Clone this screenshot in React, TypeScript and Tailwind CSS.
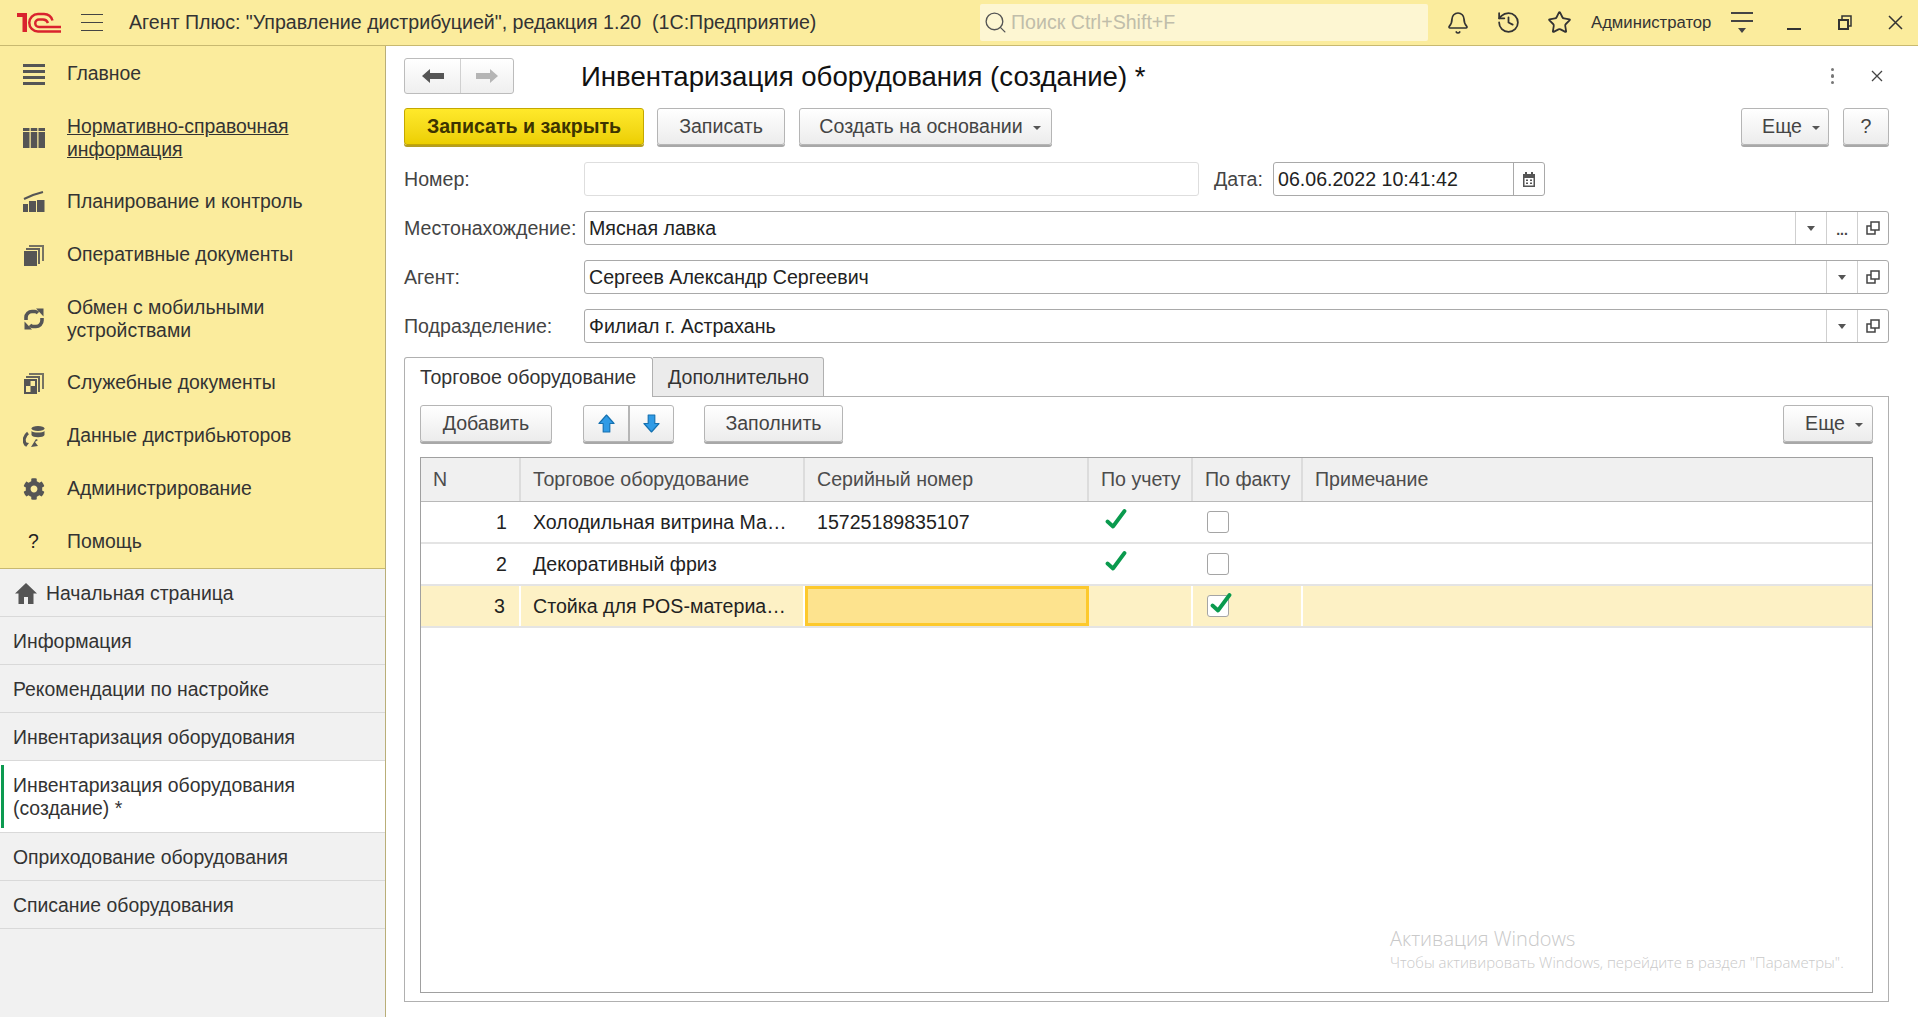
import { Bell, History, Search, Star } from "lucide-react";
import { FaCog } from "react-icons/fa";
import type { ReactNode } from "react";

function Logo() {
  return (
    <svg width="46" height="24" viewBox="0 0 46 24" fill="none" stroke="#d9232e" strokeWidth="2.500">
      <path d="M1 2h10v19H6.500V6H1z" fill="#d9232e" stroke="none" />
      <path d="M45 20.500H22a8.750 8.750 0 0 1 0-17.500h6a9 9 0 0 1 8.500 6.500" />
      <path d="M45 16H23a3.750 3.750 0 0 1 0-7.500h4a5.500 5.500 0 0 1 5 3.500" />
    </svg>
  );
}

const ic = "w-[22px] h-[22px] text-[#555]";

function MainIcon() {
  return (
    <svg className={ic} viewBox="0 0 22 22" fill="currentColor">
      <rect y="1" width="22" height="3" />
      <rect y="7" width="22" height="3" />
      <rect y="13" width="22" height="3" />
      <rect y="19" width="22" height="3" />
    </svg>
  );
}

function RefIcon() {
  return (
    <svg className={ic} viewBox="0 0 22 22" fill="currentColor">
      <rect x="0" y="1" width="6.500" height="3" />
      <rect x="7.750" y="1" width="6.500" height="3" />
      <rect x="15.500" y="1" width="6.500" height="3" />
      <rect x="0" y="5" width="6.500" height="16" />
      <rect x="7.750" y="5" width="6.500" height="16" />
      <rect x="15.500" y="5" width="6.500" height="16" />
    </svg>
  );
}

function PlanIcon() {
  return (
    <svg className={ic} viewBox="0 0 22 22" fill="currentColor">
      <rect x="0" y="13" width="5" height="8" />
      <rect x="6" y="10" width="7" height="11" />
      <rect x="14" y="9" width="7.500" height="12" />
      <path d="M1 8l9-4 10-3" fill="none" stroke="currentColor" strokeWidth="2" />
    </svg>
  );
}

function DocsIcon() {
  return (
    <svg className={ic} viewBox="0 0 22 22" fill="currentColor">
      <path d="M6 4V1h15v16h-2V3H6z" opacity=".8" />
      <path d="M3 7V4h14v16h-2V6H3z" opacity=".9" />
      <rect x="1" y="7" width="13" height="15" />
    </svg>
  );
}

function ServiceIcon() {
  return (
    <svg className={ic} viewBox="0 0 22 22" fill="currentColor">
      <path d="M6 4V1h15v16h-2V3H6z" opacity=".8" />
      <path d="M3 7V4h14v16h-2V6H3z" opacity=".9" />
      <path d="M1 7h13v15H1zM7.500 9v5H3v6h4.500v-6H12V9z" fillRule="evenodd" />
    </svg>
  );
}

function SyncIcon() {
  return (
    <svg className={ic} viewBox="0 0 22 22" fill="none" stroke="currentColor" strokeWidth="3.600">
      <path d="M3 12V9.500a6 6 0 0 1 6-6h3a5 5 0 0 1 3 1.500" />
      <path d="M19 10v2.500a6 6 0 0 1-6 6h-3a5 5 0 0 1-3-1.500" />
      <path d="M13 0.500l7.500 0v8z" fill="currentColor" stroke="none" />
      <path d="M9 21.500H1.500v-8z" fill="currentColor" stroke="none" />
    </svg>
  );
}

function DataIcon() {
  return (
    <svg className={ic} viewBox="0 0 22 22" fill="currentColor">
      <ellipse cx="15" cy="3.500" rx="6.500" ry="2.500" />
      <path d="M8.500 6c2 2 11 2 13 0v4c-1 3-12 3-13 0z" />
      <path d="M5 8C1 11 0 16 3 20" fill="none" stroke="currentColor" strokeWidth="3" />
      <path d="M0 17l6 1-3 4zM8 22l7-1-3-4 3-2-2-1z" />
    </svg>
  );
}

function HomeIcon() {
  return (
    <svg width="22" height="21" viewBox="0 0 22 21" fill="#555">
      <path d="M11 0L0 10.500h3.500V21h5.500v-7h4v7h5.500V10.500H22z" />
    </svg>
  );
}

const mainItems: { icon: ReactNode; lines: string[]; link?: boolean; pad: string }[] = [
  { icon: <MainIcon />, lines: ["Главное"], pad: "pt-[16px] pb-[14px]" },
  { icon: <RefIcon />, lines: ["Нормативно-справочная", "информация"], link: true, pad: "pt-[16px] pb-[14px]" },
  { icon: <PlanIcon />, lines: ["Планирование и контроль"], pad: "py-[15px]" },
  { icon: <DocsIcon />, lines: ["Оперативные документы"], pad: "py-[15px]" },
  { icon: <SyncIcon />, lines: ["Обмен с мобильными", "устройствами"], pad: "pt-[15px] pb-[14px]" },
  { icon: <ServiceIcon />, lines: ["Служебные документы"], pad: "py-[15px]" },
  { icon: <DataIcon />, lines: ["Данные дистрибьюторов"], pad: "py-[15px]" },
  { icon: <FaCog className={ic} />, lines: ["Администрирование"], pad: "py-[15px]" },
  { icon: <span className="text-[#222]">?</span>, lines: ["Помощь"], pad: "py-[15px]" },
];

const openItems = [
  "Информация",
  "Рекомендации по настройке",
  "Инвентаризация оборудования",
];

function Btn({ children, className = "" }: { children: ReactNode; className?: string }) {
  return (
    <button className={`flex items-center justify-center h-[37px] rounded-[3px] border border-[#b5b5b5] bg-linear-to-b from-white to-[#ececec] shadow-[0_2px_0_#a8a8a8] text-[#444] ${className}`}>
      {children}
    </button>
  );
}

function Caret() {
  return <span className="ml-[10px] mt-[2px] w-0 h-0 border-x-[4px] border-x-transparent border-t-[4px] border-t-[#555]" />;
}

function OpenIcon() {
  return (
    <svg width="14" height="14" viewBox="0 0 14 14" fill="none" stroke="#444" strokeWidth="1.500">
      <rect x="5" y="1" width="8" height="8" />
      <path d="M5 5H1v8h8V9" />
    </svg>
  );
}

function FieldButton({ children }: { children: ReactNode }) {
  return <span className="flex items-center justify-center w-[31px] h-full border-l border-[#cfcfcf]">{children}</span>;
}

function DropTriangle() {
  return <span className="w-0 h-0 border-x-[4px] border-x-transparent border-t-[5px] border-t-[#555]" />;
}

function Field({ label, value, dots }: { label: string; value: string; dots?: boolean }) {
  return (
    <div className="flex items-center h-[34px] mt-[15px]">
      <label className="w-[180px] text-[#444] whitespace-nowrap">{label}</label>
      <div className="flex flex-1 items-center h-full rounded-[3px] border border-[#a9a9a9] bg-white">
        <span className="flex-1 pl-[4px] text-[#222]">{value}</span>
        <FieldButton><DropTriangle /></FieldButton>
        {dots && <FieldButton><span className="mt-[4px] text-[14px] font-bold leading-none text-[#444]">...</span></FieldButton>}
        <FieldButton><OpenIcon /></FieldButton>
      </div>
    </div>
  );
}

function BlueArrow({ down }: { down?: boolean }) {
  return (
    <svg width="17" height="19" viewBox="0 0 18 20" className={down ? "rotate-180" : ""}>
      <path d="M9 1l8 9h-4.500v9h-7v-9H1z" fill="#2f9be6" stroke="#1470b0" strokeWidth="1.200" strokeLinejoin="round" />
    </svg>
  );
}

function Tick() {
  return (
    <svg width="22" height="20" viewBox="0 0 22 20" fill="none" stroke="#0a9a4e" strokeWidth="3.800" strokeLinecap="round" strokeLinejoin="round">
      <path d="M2.500 12.500l5.500 5L19.500 2" />
    </svg>
  );
}

function Check({ on }: { on?: boolean }) {
  return (
    <span className="relative block w-[22px] h-[22px] rounded-[3px] border border-[#a5a5a5] bg-white">
      {on && <span className="absolute left-[2px] -top-[3px]"><Tick /></span>}
    </span>
  );
}

const th = "flex items-center px-[12px] h-full border-r-2 border-[#dcdcdc] text-[#4c4c4c]";

const rows = [
  { n: 1, name: "Холодильная витрина Ма…", serial: "15725189835107", plan: true },
  { n: 2, name: "Декоративный фриз", serial: "", plan: true },
];

export default function App() {
  return (
    <div className="flex flex-col h-screen overflow-hidden bg-white text-[19.600px] leading-[23px] text-[#333] font-['Liberation_Sans',Arial,sans-serif]">
      <header className="flex items-center h-[46px] shrink-0 border-b border-[#c8b970] bg-[#fbec9d]">
        <div className="ml-[16px] w-[46px]"><Logo /></div>
        <div className="flex flex-col gap-[6.500px] ml-[19px] w-[22px]">
          <span className="h-[1.500px] bg-[#444]" />
          <span className="h-[1.500px] bg-[#444]" />
          <span className="h-[1.500px] bg-[#444]" />
        </div>
        <div className="ml-[26px] w-[851px] text-[#333] whitespace-nowrap">Агент Плюс: "Управление дистрибуцией", редакция 1.20 &nbsp;(1С:Предприятие)</div>
        <div className="flex items-center w-[448px] h-[37px] rounded-[2px] bg-[#fdf6d2] pl-[3px] text-[#c0bdaa]">
          <Search className="w-[25px] h-[25px] text-[#555]" strokeWidth={1.300} />
          <span className="ml-[3px] whitespace-nowrap">Поиск Ctrl+Shift+F</span>
        </div>
        <Bell className="ml-[18px] w-[24px] h-[26px] text-[#333]" strokeWidth={1.700} />
        <History className="ml-[26px] w-[25px] h-[25px] text-[#333]" strokeWidth={1.700} />
        <Star className="ml-[26px] w-[25px] h-[25px] text-[#333]" strokeWidth={1.700} />
        <span className="ml-[19px] text-[16.700px] text-[#333] whitespace-nowrap">Администратор</span>
        <div className="flex flex-col gap-[6px] ml-[20px] w-[22px] shrink-0 items-center">
          <span className="h-[2px] w-full bg-[#444]" />
          <span className="h-[2px] w-full bg-[#444]" />
          <span className="w-0 h-0 border-x-[4px] border-x-transparent border-t-[5px] border-t-[#444]" />
        </div>
        <span className="ml-[34px] mt-[13px] w-[14px] h-[2.500px] shrink-0 bg-[#333]" />
        <svg className="ml-[37px] shrink-0" width="14" height="15" viewBox="0 0 14 15" fill="none" stroke="#333" strokeWidth="2">
          <rect x="1" y="5" width="9" height="9" />
          <path d="M4 4V1h9v10h-2" strokeWidth="1.500" />
        </svg>
        <svg className="ml-[36px] shrink-0" width="15" height="15" viewBox="0 0 15 15" stroke="#333" strokeWidth="1.500">
          <path d="M1 1l13 13M14 1L1 14" />
        </svg>
      </header>

      <div className="flex flex-1 min-h-0">
        <aside className="flex flex-col w-[386px] shrink-0 border-r border-[#b9ae78] bg-[#f1f1f1] text-[19.400px]">
          <nav className="bg-[#fbec9d] border-b border-[#c8b970]">
            {mainItems.map((item) => (
              <div key={item.lines[0]} className={`flex items-center ${item.pad}`}>
                <span className="flex justify-center w-[67px]">{item.icon}</span>
                <span className={item.link ? "underline" : ""}>
                  {item.lines.map((l) => <div key={l}>{l}</div>)}
                </span>
              </div>
            ))}
          </nav>
          <div className="flex items-center gap-[9px] h-[48px] pl-[15px] pt-[1px] border-b border-[#d9d9d9]">
            <HomeIcon />
            <span>Начальная страница</span>
          </div>
          {openItems.map((t) => (
            <div key={t} className="flex items-center h-[48px] pl-[13px] pt-[2px] border-b border-[#d9d9d9]">{t}</div>
          ))}
          <div className="relative h-[72px] pl-[13px] pt-[13px] bg-white border-b border-[#d9d9d9]">
            <span className="absolute left-[1px] top-[4px] bottom-[4px] w-[3px] bg-[#0c9a50]" />
            Инвентаризация оборудования<br />(создание) *
          </div>
          <div className="flex items-center h-[48px] pl-[13px] pt-[2px] border-b border-[#d9d9d9]">Оприходование оборудования</div>
          <div className="flex items-center h-[48px] pl-[13px] pt-[2px] border-b border-[#d9d9d9]">Списание оборудования</div>
        </aside>

        <main className="flex flex-col flex-1 min-w-0 pl-[18px] pr-[29px] pt-[12px] pb-[15px]">
          <div className="flex items-center h-[36px]">
            <div className="flex items-center w-[110px] h-full rounded-[3px] border border-[#bcbcbc] bg-linear-to-b from-white to-[#efefef]">
              <span className="flex items-center justify-center w-[56px] h-full border-r border-[#d0d0d0]">
                <svg width="22" height="14" viewBox="0 0 22 14" fill="#555"><path d="M0 7l8-7v4h14v6H8v4z" /></svg>
              </span>
              <span className="flex items-center justify-center flex-1">
                <svg width="22" height="14" viewBox="0 0 22 14" fill="#b5b5b5"><path d="M22 7l-8-7v4H0v6h14v4z" /></svg>
              </span>
            </div>
            <h1 className="ml-[67px] text-[27.600px] text-[#111] whitespace-nowrap">Инвентаризация оборудования (создание) *</h1>
            <span className="ml-auto flex flex-col gap-[3px] mr-[37px]">
              <span className="w-[3.500px] h-[3.500px] rounded-full bg-[#777]" />
              <span className="w-[3.500px] h-[3.500px] rounded-full bg-[#777]" />
              <span className="w-[3.500px] h-[3.500px] rounded-full bg-[#777]" />
            </span>
            <svg className="mr-[6px]" width="12" height="12" viewBox="0 0 12 12" stroke="#444" strokeWidth="1.300">
              <path d="M1 1l10 10M11 1L1 11" />
            </svg>
          </div>

          <div className="flex mt-[14px]">
            <button className="h-[37px] w-[240px] rounded-[3px] border border-[#c4a800] bg-linear-to-b from-[#ffe92a] to-[#eccf00] shadow-[0_2px_0_#b59e1f] text-[#3d3400] font-bold">
              Записать и закрыть
            </button>
            <Btn className="ml-[13px] w-[128px]">Записать</Btn>
            <Btn className="ml-[14px] w-[253px] pl-[9px]">Создать на основании<Caret /></Btn>
            <Btn className="ml-auto w-[88px] pl-[12px]">Еще<Caret /></Btn>
            <Btn className="ml-[14px] w-[46px]">?</Btn>
          </div>

          <div className="flex items-center h-[34px] mt-[17px]">
            <label className="w-[180px] text-[#444]">Номер:</label>
            <div className="w-[615px] h-full rounded-[3px] border border-[#dedede]" />
            <label className="ml-[15px] w-[59px] text-[#444]">Дата:</label>
            <div className="flex items-center w-[272px] h-full rounded-[3px] border border-[#a9a9a9]">
              <span className="flex-1 pl-[4px] text-[#222]">06.06.2022 10:41:42</span>
              <span className="flex items-center justify-center w-[31px] h-full border-l border-[#a9a9a9]">
                <svg width="12" height="15" viewBox="0 0 12 15" fill="#555">
                  <path d="M0 2h2V0h2v2h4V0h2v2h2v13H0zM1.500 6v7.500h9V6zM3 7.500h2v1.500H3zm4 0h2v1.500H7zM3 10.500h2V12H3zm4 0h2V12H7z" fillRule="evenodd" />
                </svg>
              </span>
            </div>
          </div>
          <Field label="Местонахождение:" value="Мясная лавка" dots />
          <Field label="Агент:" value="Сергеев Александр Сергеевич" />
          <Field label="Подразделение:" value="Филиал г. Астрахань" />

          <div className="flex mt-[14px] h-[40px] -mb-px">
            <div className="relative z-10 flex items-center w-[249px] px-[15px] rounded-t-[3px] border border-b-0 border-[#b0b0b0] bg-white text-[#333] whitespace-nowrap">Торговое оборудование</div>
            <div className="flex items-center w-[171px] px-[15px] rounded-tr-[3px] border border-l-0 border-[#b0b0b0] bg-[#ebebeb] text-[#333]">Дополнительно</div>
          </div>

          <div className="relative flex flex-col flex-1 min-h-0 px-[15px] pt-[8px] pb-[8px] border border-[#b0b0b0]">
            <div className="flex">
              <Btn className="w-[132px]">Добавить</Btn>
              <div className="flex ml-[31px] w-[91px] h-[37px] rounded-[3px] border border-[#b5b5b5] bg-linear-to-b from-white to-[#ececec] shadow-[0_2px_0_#a8a8a8]">
                <span className="flex items-center justify-center w-[46px] border-r-2 border-[#b5b5b5]"><BlueArrow /></span>
                <span className="flex items-center justify-center flex-1 pr-[1px]"><BlueArrow down /></span>
              </div>
              <Btn className="ml-[30px] w-[139px]">Заполнить</Btn>
              <Btn className="ml-auto w-[90px] pl-[12px]">Еще<Caret /></Btn>
            </div>

            <div className="flex flex-col flex-1 min-h-0 mt-[15px] border border-[#a0a0a0]">
              <div className="flex h-[44px] border-b border-[#b8b8b8] bg-[#f0f0f0]">
                <div className={`${th} w-[100px]`}>N</div>
                <div className={`${th} w-[284px] whitespace-nowrap`}>Торговое оборудование</div>
                <div className={`${th} w-[284px]`}>Серийный номер</div>
                <div className={`${th} w-[104px] whitespace-nowrap`}>По учету</div>
                <div className={`${th} w-[110px] whitespace-nowrap`}>По факту</div>
                <div className="flex items-center px-[12px] text-[#4c4c4c]">Примечание</div>
              </div>
              {rows.map((r) => (
                <div key={r.n} className="flex items-center h-[42px] border-b-2 border-[#e4e4e4] text-[#222]">
                  <div className="w-[100px] pr-[14px] text-right">{r.n}</div>
                  <div className="w-[284px] pl-[12px] whitespace-nowrap">{r.name}</div>
                  <div className="w-[284px] pl-[12px]">{r.serial}</div>
                  <div className="w-[104px] pl-[16px] -mt-[6px]"><Tick /></div>
                  <div className="pl-[14px]"><Check /></div>
                </div>
              ))}
              <div className="flex h-[42px] border-b-2 border-[#e4e4e4] bg-[#fdf1c5] text-[#222]">
                <div className="flex items-center justify-end w-[100px] pr-[14px] border-r-2 border-white">3</div>
                <div className="flex items-center w-[284px] pl-[12px] border-r-2 border-white whitespace-nowrap">Стойка для POS-материа…</div>
                <div className="w-[284px] border-[3px] border-[#fdc92c] bg-[#fde38e]" />
                <div className="w-[104px] border-r-2 border-white" />
                <div className="flex items-center w-[110px] pl-[14px] border-r-2 border-white"><Check on /></div>
              </div>
            </div>

            <div className="absolute left-[985px] top-[529px] text-[#c9c9c9] font-['Open_Sans',sans-serif] font-light">
              <div className="text-[20px] leading-[26px]">Активация Windows</div>
              <div className="text-[14.900px] leading-[20px] whitespace-nowrap">Чтобы активировать Windows, перейдите в раздел "Параметры".</div>
            </div>
          </div>
        </main>
      </div>
    </div>
  );
}
